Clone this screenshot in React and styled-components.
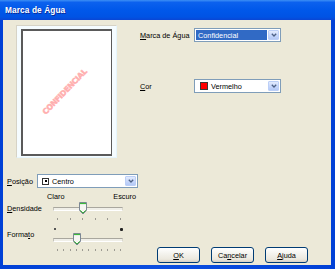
import React from 'react';
import styled, { createGlobalStyle } from 'styled-components';

const GlobalStyle = createGlobalStyle`
  html, body { margin: 0; padding: 0; background: #fff; }
  body {
    font-family: "Liberation Sans", Arial, sans-serif;
    font-size: 7.3px;
    color: #000;
  }
  u { text-decoration: underline; text-underline-offset: 1px; }
`;

const Window = styled.div`
  width: 335px;
  height: 269px;
  display: flex;
  flex-direction: column;
  background: #0046d8;
`;

const TitleBar = styled.div`
  height: 20px;
  flex: none;
  display: flex;
  align-items: center;
  padding: 0 5px;
  background: linear-gradient(to bottom, #3d8ff5 0%, #0c61ee 12%, #0058ea 50%, #0053e4 85%, #0a46d4 100%);
  color: #fff;
  font-weight: bold;
  font-size: 8.3px;
  text-shadow: 1px 1px 0 #0b2c9a;
  letter-spacing: 0.1px;
`;

const Frame = styled.div`
  flex: 1;
  display: flex;
  padding: 0 4px 4px 3px;
  background: linear-gradient(to right, #0040d6, #0b4ee0 50%, #0040d6);
`;

const Body = styled.div`
  flex: 1;
  display: flex;
  background: #ece9d8;
`;

const LeftCol = styled.div`
  width: 131px;
  flex: none;
  display: flex;
  flex-direction: column;
  padding-left: 4px;
`;

const RightCol = styled.div`
  flex: 1;
  display: flex;
  flex-direction: column;
  padding: 0 23px 2px 2px;
`;

const PreviewFrame = styled.div`
  width: 101px;
  height: 133px;
  box-sizing: border-box;
  margin: 5px 0 0 9px;
  padding: 3px 4px 1px 4px;
  display: flex;
  border: 1px solid;
  border-color: #d6d3c6 #e6f5fc #e6f5fc #d6d3c6;
  background: #f5fcff;
`;

const Paper = styled.div`
  flex: 1;
  display: flex;
  align-items: center;
  justify-content: center;
  background: #fff;
  border: 2px solid #5a5a5a;
  border-right-width: 1.5px;
  overflow: hidden;
`;

const Watermark = styled.span`
  transform: rotate(-46deg) translate(-1px, -2px);
  color: #ffaeae;
  font-family: "DejaVu Sans", sans-serif;
  font-weight: bold;
  font-size: 7.6px;
  letter-spacing: -0.3px;
  -webkit-text-stroke: 0.5px #ffaeae;
  white-space: nowrap;
`;

const FieldRow = styled.div`
  display: flex;
  align-items: center;
  height: 14px;
  margin-top: ${p => p.$top}px;
`;

const Label = styled.span`
  width: ${p => p.$width}px;
  flex: none;
  white-space: nowrap;
  line-height: 9px;
`;

const Combo = styled.div`
  width: ${p => p.$width}px;
  height: 14px;
  box-sizing: border-box;
  border: 1px solid #7f9db9;
  background: #fff;
  padding: 1px;
  display: flex;
  gap: 1px;
`;

const ComboText = styled.div`
  flex: 1;
  display: flex;
  align-items: center;
  gap: 3px;
  padding-left: ${p => p.$pad}px;
  background: ${p => (p.$selected ? '#316ac5' : 'transparent')};
  color: ${p => (p.$selected ? '#fff' : '#000')};
  white-space: nowrap;
`;

const ArrowButton = styled.div`
  width: 11px;
  flex: none;
  box-sizing: border-box;
  display: flex;
  align-items: center;
  justify-content: center;
  border: 1px solid #bccff7;
  border-radius: 1px;
  background: linear-gradient(to bottom, #e3ebfd, #c4d5fb 60%, #b4c9f6);
`;

const Swatch = styled.span`
  width: 6px;
  height: 6px;
  flex: none;
  background: ${p => p.$color};
  border: 1px solid #3a3a3a;
`;

const PosIcon = styled.span`
  width: 5px;
  height: 5px;
  flex: none;
  border: 1px solid #333;
  display: flex;
  align-items: center;
  justify-content: center;
  &::after {
    content: '';
    width: 2px;
    height: 2px;
    background: #000;
  }
`;

const ScaleLabels = styled.div`
  display: flex;
  justify-content: space-between;
  margin: 4px 2px 0 40px;
  line-height: 9px;
`;

const SliderRow = styled.div`
  display: flex;
  align-items: flex-start;
  margin-top: ${p => p.$top}px;
`;

const SliderLabel = styled.span`
  width: 46px;
  flex: none;
  line-height: ${p => p.$lh}px;
  margin-top: ${p => p.$top || 0}px;
`;

const SliderBox = styled.div`
  width: 70px;
  display: flex;
  flex-direction: column;
`;

const Marks = styled.div`
  height: 7px;
  display: flex;
  justify-content: space-between;
  align-items: flex-start;
  padding: 2px 0 0 1px;
  box-sizing: border-box;
`;

const MinusMark = styled.span`
  width: 2px;
  height: 2px;
  background: #555;
`;

const PlusMark = styled.span`
  width: 3px;
  height: 3px;
  background: #222;
  border-radius: 1px;
`;

const TrackArea = styled.div`
  position: relative;
  height: 13px;
  display: flex;
  align-items: center;
`;

const Track = styled.div`
  width: 100%;
  height: 2px;
  border: 1px solid;
  border-color: #a9a79e #d8d6cc #fff #c4c2b8;
  background: #f0efe8;
`;

const ThumbWrap = styled.svg`
  position: absolute;
  top: 0;
`;

const Ticks = styled.div`
  display: flex;
  justify-content: space-between;
  padding: 0 2px 0 4px;
  margin-top: 3px;
`;

const Tick = styled.span`
  width: 1px;
  height: 2px;
  background: #9c9a92;
`;

const ButtonBar = styled.div`
  margin-top: auto;
  display: flex;
  justify-content: flex-end;
  gap: 11px;
`;

const Button = styled.button`
  width: 43px;
  height: 16px;
  padding: 0;
  border: 1px solid #003c74;
  border-radius: 3px;
  background: linear-gradient(to bottom, #ffffff, #f4f3ee 40%, #ebe8de 80%, #d6d0c5);
  font-family: inherit;
  font-size: 7.3px;
  color: #000;
`;

const Chevron = () => (
  <svg width="6" height="4" viewBox="0 0 6 4">
    <path d="M0.8 0.8 L3 3 L5.2 0.8" fill="none" stroke="#4d6185" strokeWidth="1.3" />
  </svg>
);

const Thumb = ({ left }) => (
  <ThumbWrap width="8" height="13" viewBox="0 0 8 13" style={{ left }}>
    <path d="M0.5 0.5 H7.5 V8.5 L4 12 L0.5 8.5 Z" fill="#f6f6f2" stroke="#7c8794" strokeWidth="1" />
    <path d="M1 1.5 H7" stroke="#3cb83c" strokeWidth="1.2" />
    <path d="M1.2 8.3 L4 11 L6.8 8.3" fill="none" stroke="#35b035" strokeWidth="1" />
  </ThumbWrap>
);

const Slider = ({ ticks, value }) => {
  const span = 64;
  const left = 4 + (value / (ticks - 1)) * span - 3.5;
  return (
    <>
      <TrackArea>
        <Track />
        <Thumb left={left} />
      </TrackArea>
      <Ticks>
        {Array.from({ length: ticks }, (_, i) => <Tick key={i} />)}
      </Ticks>
    </>
  );
};

const Dropdown = ({ width, selected, pad = 2, children }) => (
  <Combo $width={width}>
    <ComboText $selected={selected} $pad={pad}>{children}</ComboText>
    <ArrowButton><Chevron /></ArrowButton>
  </Combo>
);

export default function App() {
  return (
    <>
      <GlobalStyle />
      <Window>
        <TitleBar>Marca de Água</TitleBar>
        <Frame>
          <Body>
            <LeftCol>
              <PreviewFrame>
                <Paper>
                  <Watermark>CONFIDENCIAL</Watermark>
                </Paper>
              </PreviewFrame>

              <FieldRow $top={16}>
                <Label $width={30}><u>P</u>osição</Label>
                <Dropdown width={101} pad={3}>
                  <PosIcon />
                  Centro
                </Dropdown>
              </FieldRow>

              <ScaleLabels>
                <span>Claro</span>
                <span>Escuro</span>
              </ScaleLabels>

              <SliderRow $top={1}>
                <SliderLabel $lh={13}><u>D</u>ensidade</SliderLabel>
                <SliderBox>
                  <Slider ticks={6} value={2} />
                </SliderBox>
              </SliderRow>

              <SliderRow $top={6}>
                <SliderLabel $lh={9} $top={4}>Forma<u>t</u>o</SliderLabel>
                <SliderBox>
                  <Marks>
                    <MinusMark />
                    <PlusMark />
                  </Marks>
                  <Slider ticks={11} value={3} />
                </SliderBox>
              </SliderRow>
            </LeftCol>

            <RightCol>
              <FieldRow $top={8}>
                <Label $width={54}><u>M</u>arca de Água</Label>
                <Dropdown width={87} selected>Confidencial</Dropdown>
              </FieldRow>

              <FieldRow $top={37}>
                <Label $width={54}><u>C</u>or</Label>
                <Dropdown width={87} pad={4}>
                  <Swatch $color="#ff0000" />
                  Vermelho
                </Dropdown>
              </FieldRow>

              <ButtonBar>
                <Button><u>O</u>K</Button>
                <Button>Ca<u>n</u>celar</Button>
                <Button><u>A</u>juda</Button>
              </ButtonBar>
            </RightCol>
          </Body>
        </Frame>
      </Window>
    </>
  );
}
